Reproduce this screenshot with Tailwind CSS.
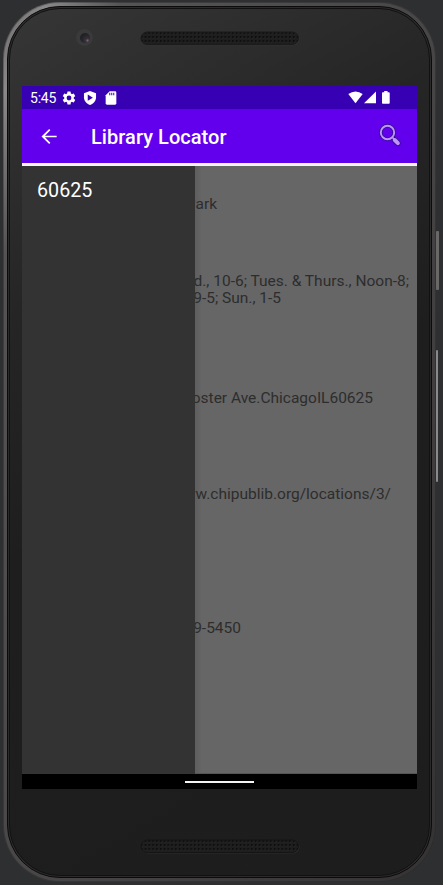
<!DOCTYPE html>
<html lang="en">
<head>
<meta charset="utf-8">
<title>Library Locator</title>
<script src="https://cdn.jsdelivr.net/npm/@tailwindcss/browser@4"></script>
</head>
<body class="relative h-[885px] w-[443px] overflow-hidden bg-[#2d2f31] font-['Roboto',sans-serif]">
  <!-- side buttons -->
  <div class="absolute left-[436px] top-[231px] h-[59px] w-[3px] rounded-[1px] bg-[#6a6767]"></div>
  <div class="absolute left-[436px] top-[350px] h-[132px] w-[2px] rounded-[1px] bg-[#8a8888]"></div>

  <!-- phone shell -->
  <div class="ml-[3px] h-[883px] w-[433px] pt-[2px]">
    <div class="h-[880px] rounded-[57px] bg-[linear-gradient(115deg,#454343_0%,#6a6868_5%,#3f3d3d_14%,#363535_60%,#2c2b2b_100%)] p-[1px]">
    <div class="h-full rounded-[56px] bg-[linear-gradient(115deg,#6a6868_0%,#8a8888_5%,#555353_14%,#454343_60%,#343232_100%)] p-[3px]">
      <div class="h-full rounded-[53px] border border-[#0b0b0b] bg-[#2b2b2b] p-px">
        <div class="h-full rounded-[51px] border border-[#111111] bg-[linear-gradient(150deg,#363637_0%,#303031_10%,#252525_28%,#1e1e1e_50%,#1d1d1e_100%)]">
          <div class="flex h-[77px] pl-[66px] pt-[20px]">
            <div class="flex h-[17px] w-[17px] items-center justify-center rounded-full bg-[#3a3a3b]">
              <div class="h-[10px] w-[10px] rounded-full bg-[radial-gradient(circle_at_75%_75%,#85606c_0%,#33303a_20%,#202026_65%)]"></div>
            </div>
            <svg class="ml-[47px] mt-[2px]" width="160" height="15" viewBox="0 0 160 15">
              <defs><pattern id="grill" width="3.8" height="4" patternUnits="userSpaceOnUse"><rect width="3.8" height="4" fill="#1e1e1e"/><circle cx="1.8" cy="2" r=".9" fill="#090909"/><circle cx="2.7" cy="3" r=".4" fill="#373737"/></pattern></defs>
              <rect x="1.5" y="1.5" width="158" height="13" rx="6.5" fill="#333"/>
              <rect x="1" y="1" width="157.500" height="12.500" rx="6.200" fill="url(#grill)" stroke="#1b1b1b"/>
            </svg>
          </div>

          <!-- screen -->
          <div class="ml-[12px] flex h-[703px] w-[395px] flex-col">
            <div class="flex h-[23px] items-center bg-[#3700b3] pl-[8px] pr-[27px] text-white">
              <span class="w-[31.500px] pt-px text-[14px] leading-none tracking-[-0.2px]">5:45</span>
              <svg class="h-[14px] w-[14px]" viewBox="1.500 1.500 21 21" fill="#fff"><path d="M19.140 12.940c.04-.3.06-.61.06-.94 0-.32-.02-.64-.07-.94l2.030-1.580a.49.49 0 0 0 .12-.61l-1.920-3.320a.49.49 0 0 0-.59-.22l-2.390.96c-.5-.38-1.030-.7-1.620-.94l-.36-2.540a.48.48 0 0 0-.48-.41h-3.840a.47.47 0 0 0-.47.41l-.36 2.540c-.59.24-1.130.57-1.620.94l-2.390-.96a.48.48 0 0 0-.59.22L2.740 8.870a.47.47 0 0 0 .12.61l2.030 1.580c-.05.3-.09.63-.09.94s.02.64.07.94l-2.030 1.580a.49.49 0 0 0-.12.61l1.920 3.320c.12.22.37.29.59.22l2.390-.96c.5.38 1.030.7 1.620.94l.36 2.540c.05.24.24.41.48.41h3.840c.24 0 .44-.17.47-.41l.36-2.540c.59-.24 1.130-.56 1.620-.94l2.390.96c.22.08.47 0 .59-.22l1.920-3.320a.47.47 0 0 0-.12-.61zM12 15.600A3.600 3.600 0 1 1 12 8.400a3.600 3.600 0 0 1 0 7.200z"/></svg>
              <svg class="ml-[7px] h-[14px] w-[14px]" viewBox="1 1 22 22"><path fill="#fff" d="M12 1 2.500 4.500V11c0 5.600 4 10.600 9.500 12 5.500-1.400 9.500-6.400 9.500-12V4.500z"/><path fill="#3700b3" d="M8.500 6.500v10l8-5z"/></svg>
              <svg class="ml-[7px] h-[14px] w-[14px]" viewBox="1.500 1.500 21 21"><path fill="#fff" d="M18 2h-8L4 8v12a2 2 0 0 0 2 2h12a2 2 0 0 0 2-2V4a2 2 0 0 0-2-2z"/><path fill="#3700b3" fill-opacity=".75" d="M9 4h2v4H9zM12 4h2v4h-2zM15 4h2v4h-2z"/></svg>
              <svg class="ml-auto h-[13px] w-[15px]" viewBox="0 0 15 13"><path fill="#fff" d="M.3 3Q7.500-2 14.700 3L7.500 12.300z"/></svg>
              <svg class="ml-[1px] h-[13px] w-[12px]" viewBox="0 0 12 13"><path fill="#fff" d="M0 12.300 12 .5v11.800z"/></svg>
              <svg class="ml-[6px] h-[13px] w-[8px]" viewBox="0 0 8 13"><path fill="#fff" d="M2.200 0h3.300v1.300h1.400q.8 0 .8.800v9.800q0 .8-.8.800H.8q-.8 0-.8-.8V2.100q0-.8.800-.8h1.400z"/></svg>
            </div>
            <div class="flex h-[54px] items-center bg-[#6200ee] pl-[15px] pr-[15px] text-white">
              <svg class="h-[23px] w-[23px]" viewBox="-0.500 0 24 24" fill="#fff"><path d="M20 11.100H7.830l5.590-5.690L12.200 4.200l-8 7.800 8 7.800 1.210-1.210L7.830 12.900H20z"/></svg>
              <h1 class="ml-[31px] pt-[2px] text-[20px] font-medium leading-none tracking-[0.05px]">Library Locator</h1>
              <svg class="mb-[2px] ml-auto h-[23px] w-[23px]" viewBox="0 0 23 23" fill="none"><g stroke="#34108a" stroke-linecap="round"><circle cx="8.500" cy="8.500" r="6.700" stroke-width="3.400"/><path d="m14 14 2 2" stroke-width="3.500"/><path d="m15.500 16 3.300 3.300" stroke-width="5.600"/></g><g stroke="#bf94f8" stroke-linecap="round"><circle cx="8.500" cy="8.500" r="6.700" stroke-width="1.900"/><path d="m13.500 13.500 2 2" stroke-width="1.700"/><path d="m15.700 16 3.200 3.200" stroke-width="3.900"/></g></svg>
            </div>
            <div class="h-[3px] bg-[#f5f5f5]"></div>
            <div class="flex h-[608px]">
              <nav class="w-[173px] shrink-0 bg-[#333333] pl-[15px] pt-[13px] text-[19.700px] leading-[23px] text-white">60625</nav>
              <main class="w-[222px] overflow-hidden border-b border-[#555555] bg-[linear-gradient(90deg,#5e5e5e_0px,#666666_7px)] text-[15.500px] leading-[18px] text-[#2d2d2d]">
                <div class="mt-[29px] flex h-[77px] w-[22px] justify-end whitespace-nowrap">Park</div>
                <div class="flex h-[17px] w-[214px] justify-end whitespace-nowrap">Wed., 10-6; Tues. &amp; Thurs., Noon-8;</div>
                <div class="flex h-[100px] w-[86px] justify-end whitespace-nowrap">9-5; Sun., 1-5</div>
                <div class="flex h-[96px] w-[178px] justify-end whitespace-nowrap">Foster Ave.ChicagoIL60625</div>
                <div class="flex h-[134px] w-[196px] justify-end whitespace-nowrap">www.chipublib.org/locations/3/</div>
                <div class="flex w-[46px] justify-end whitespace-nowrap">9-5450</div>
              </main>
            </div>
            <div class="flex h-[15px] items-center justify-center bg-black"><div class="h-[2px] w-[69px] bg-[#f4f4f4]"></div></div>
          </div>

          <!-- bottom speaker -->
          <svg class="ml-[130px] mt-[50px]" width="160" height="15" viewBox="0 0 160 15"><rect x="1.500" y="1.500" width="158" height="13" rx="6.500" fill="#2c2c2c"/><rect x="1" y="1" width="157.500" height="12.500" rx="6.200" fill="url(#grill)" stroke="#151515"/></svg>
        </div>
      </div>
    </div>
    </div>
  </div>
</body>
</html>
